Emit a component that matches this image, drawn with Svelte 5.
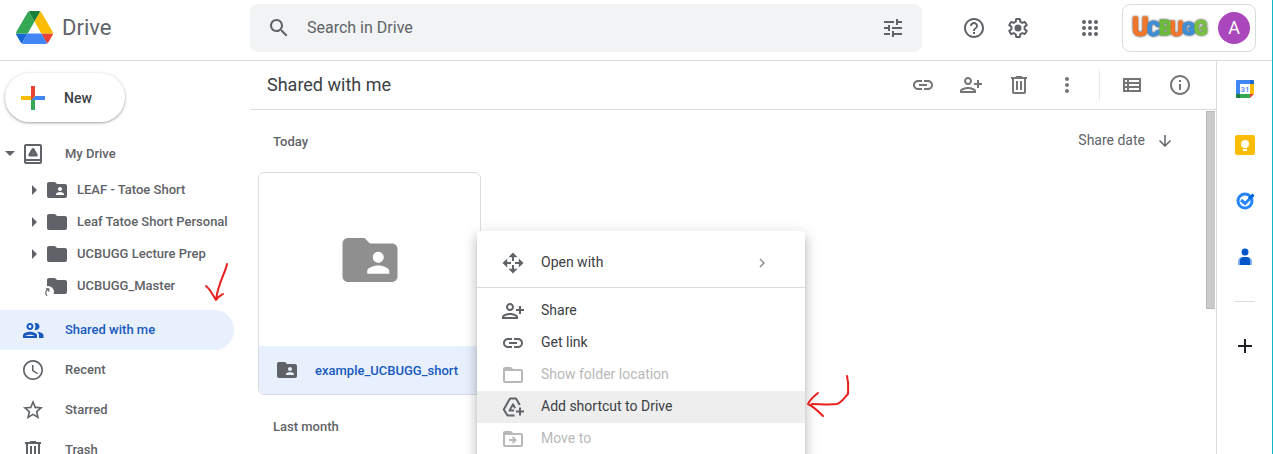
<script lang="ts">
  const icons: Record<string, string> = {
    link: 'M3.9 12c0-1.71 1.39-3.1 3.1-3.1h4V7H7c-2.76 0-5 2.24-5 5s2.24 5 5 5h4v-1.9H7c-1.71 0-3.1-1.39-3.1-3.1zM8 13h8v-2H8v2zm9-6h-4v1.9h4c1.71 0 3.1 1.39 3.1 3.1s-1.39 3.1-3.1 3.1h-4V17h4c2.76 0 5-2.24 5-5s-2.24-5-5-5z',
    personAdd: 'M13 8c0-2.21-1.79-4-4-4S5 5.79 5 8s1.79 4 4 4 4-1.79 4-4zm-2 0c0 1.1-.9 2-2 2s-2-.9-2-2 .9-2 2-2 2 .9 2 2zM1 18v2h16v-2c0-2.66-5.33-4-8-4s-8 1.34-8 4zm2 0c.2-.71 3.3-2 6-2 2.69 0 5.78 1.28 6 2H3zM20 15v-3h3v-2h-3V7h-2v3h-3v2h3v3h2z',
    trash: 'M15 4V3H9v1H4v2h1v13c0 1.1.9 2 2 2h10c1.1 0 2-.9 2-2V6h1V4h-5zm2 15H7V6h10v13zM9 8h2v9H9zm4 0h2v9h-2z',
    more: 'M12 8c1.1 0 2-.9 2-2s-.9-2-2-2-2 .9-2 2 .9 2 2 2zm0 2c-1.1 0-2 .9-2 2s.9 2 2 2 2-.9 2-2-.9-2-2-2zm0 6c-1.1 0-2 .9-2 2s.9 2 2 2 2-.9 2-2-.9-2-2-2z',
    list: 'M3 5v14h18V5H3zm4 2v2H5V7h2zm-2 6v-2h2v2H5zm0 2h2v2H5v-2zm14 2H9v-2h10v2zm0-4H9v-2h10v2zm0-4H9V7h10v2z',
    info: 'M11 7h2v2h-2zm0 4h2v6h-2zm1-9C6.48 2 2 6.48 2 12s4.48 10 10 10 10-4.48 10-10S17.52 2 12 2zm0 18c-4.41 0-8-3.59-8-8s3.59-8 8-8 8 3.59 8 8-3.59 8-8 8z',
    help: 'M11 18h2v-2h-2v2zm1-16C6.48 2 2 6.48 2 12s4.48 10 10 10 10-4.48 10-10S17.52 2 12 2zm0 18c-4.41 0-8-3.59-8-8s3.59-8 8-8 8 3.59 8 8-3.59 8-8 8zm0-14c-2.21 0-4 1.79-4 4h2c0-1.1.9-2 2-2s2 .9 2 2c0 2-3 1.75-3 5h2c0-2.25 3-2.5 3-5 0-2.21-1.79-4-4-4z',
    apps: 'M6 4a2 2 0 1 0 0 4a2 2 0 1 0 0-4zm6 0a2 2 0 1 0 0 4a2 2 0 1 0 0-4zm6 0a2 2 0 1 0 0 4a2 2 0 1 0 0-4zM6 10a2 2 0 1 0 0 4a2 2 0 1 0 0-4zm6 0a2 2 0 1 0 0 4a2 2 0 1 0 0-4zm6 0a2 2 0 1 0 0 4a2 2 0 1 0 0-4zM6 16a2 2 0 1 0 0 4a2 2 0 1 0 0-4zm6 0a2 2 0 1 0 0 4a2 2 0 1 0 0-4zm6 0a2 2 0 1 0 0 4a2 2 0 1 0 0-4z',
    tune: 'M13 21v-2h8v-2h-8v-2h-2v6h2zM3 17v2h6v-2H3zM21 13v-2H11v2h10zM7 9v2H3v2h4v2h2V9H7zM15 9h2V7h4V5h-4V3h-2v6zM3 5v2h10V5H3z',
    search: 'M15.500 14h-.79l-.28-.27C15.410 12.590 16 11.110 16 9.500 16 5.910 13.090 3 9.500 3S3 5.910 3 9.500 5.910 16 9.500 16c1.610 0 3.090-.59 4.230-1.570l.27.28v.79l5 4.990L20.490 19l-4.990-5zm-6 0C7.010 14 5 11.990 5 9.500S7.010 5 9.500 5 14 7.010 14 9.500 11.990 14 9.500 14z',
    folder: 'M10 4H4c-1.100 0-2 .9-2 2v12c0 1.100.9 2 2 2h16c1.100 0 2-.9 2-2V8c0-1.100-.9-2-2-2h-8l-2-2z',
    folderShared: 'M20 6h-8l-2-2H4c-1.100 0-2 .9-2 2v12c0 1.100.9 2 2 2h16c1.100 0 2-.9 2-2V8c0-1.100-.9-2-2-2zm-5 3c1.100 0 2 .9 2 2s-.9 2-2 2-2-.9-2-2 .9-2 2-2zm4 8h-8v-1c0-1.330 2.670-2 4-2s4 .67 4 2v1z',
    folderOpen: 'M20 6h-8l-2-2H4c-1.100 0-2 .9-2 2v12c0 1.100.9 2 2 2h16c1.100 0 2-.9 2-2V8c0-1.100-.9-2-2-2zm0 12H4V8h16v10z',
    moveTo: 'M20 6h-8l-2-2H4c-1.100 0-2 .9-2 2v12c0 1.100.9 2 2 2h16c1.100 0 2-.9 2-2V8c0-1.100-.9-2-2-2zm0 12H4V8h16v10zM12.200 9.200l-1.300 1.300 1.500 1.600H8v1.800h4.400l-1.500 1.600 1.300 1.300L16 13z',
    people: 'M9 13.750c-2.340 0-7 1.170-7 3.500V20h14v-2.750c0-2.330-4.660-3.500-7-3.500zM4.340 18c.84-.58 2.870-1.250 4.660-1.250s3.820.67 4.660 1.250H4.340zM9 12c1.930 0 3.500-1.570 3.500-3.500S10.930 5 9 5 5.500 6.570 5.500 8.500 7.070 12 9 12zm0-5c.83 0 1.500.67 1.500 1.500S9.830 10 9 10s-1.500-.67-1.500-1.500S8.170 7 9 7z',
    clock: 'M11.990 2C6.470 2 2 6.480 2 12s4.470 10 9.990 10C17.520 22 22 17.520 22 12S17.520 2 11.990 2zM12 20.300c-4.580 0-8.300-3.720-8.300-8.300s3.720-8.300 8.300-8.300 8.300 3.720 8.300 8.300-3.720 8.300-8.300 8.300zm.500-13.300H11v6l5.250 3.150.75-1.230-4.500-2.670z',
    star: 'M22 9.240l-7.190-.62L12 2 9.190 8.630 2 9.240l5.460 4.730L5.820 21 12 17.270 18.180 21l-1.630-7.030L22 9.240zM12 15.400l-3.760 2.270 1-4.280-3.320-2.880 4.380-.38L12 6.100l1.710 4.040 4.380.38-3.320 2.880 1 4.280L12 15.400z',
    down: 'M20 12l-1.410-1.410L13 16.170V4h-2v12.170l-5.580-5.590L4 12l8 8 8-8z',
    chevron: 'M10 6L8.590 7.410 13.170 12l-4.580 4.590L10 18l6-6z',
  };

  const folders = [
    { name: 'LEAF - Tatoe Short', icon: 'folderShared', expand: true },
    { name: 'Leaf Tatoe Short Personal', icon: 'folder', expand: true },
    { name: 'UCBUGG Lecture Prep', icon: 'folder', expand: true },
    { name: 'UCBUGG_Master', icon: 'folder', expand: false },
  ];
  const places = [
    { name: 'Shared with me', icon: 'people', active: true },
    { name: 'Recent', icon: 'clock', active: false },
    { name: 'Starred', icon: 'star', active: false },
    { name: 'Trash', icon: 'trash', active: false },
  ];
  const actions = [
    { name: 'Get link', icon: 'link' },
    { name: 'Share', icon: 'personAdd' },
    { name: 'Remove', icon: 'trash' },
    { name: 'More actions', icon: 'more' },
  ];
  const menu = [
    { name: 'Share', icon: 'personAdd' },
    { name: 'Get link', icon: 'link' },
    { name: 'Show folder location', icon: 'folderOpen', disabled: true },
    { name: 'Add shortcut to Drive', icon: 'shortcut', hover: true },
    { name: 'Move to', icon: 'moveTo', disabled: true },
  ];
  const letters = [
    { char: 'U', x: 1, y: 26, size: 25, fill: '#f0762b' },
    { char: 'C', x: 16, y: 26, size: 20, fill: '#3f8fd6' },
    { char: 'B', x: 28, y: 25, size: 20, fill: '#6dbb3c' },
    { char: 'U', x: 39, y: 26, size: 20, fill: '#f0762b' },
    { char: 'G', x: 51, y: 25, size: 19, fill: '#3f8fd6' },
    { char: 'G', x: 63, y: 25, size: 20, fill: '#7ac143' },
  ];
</script>

{#snippet icon(name: string, size = 24)}
  <svg class="icon" width={size} height={size} viewBox="0 0 24 24" aria-hidden="true">
    {#if name === 'shortcut'}
      <g fill="none" stroke="currentColor" stroke-width="2" stroke-linejoin="round">
        <path d="M13.500 20.500H6.500L2.800 14.500 9 3.500h6l3.800 6.500" />
        <path d="M13 15.500H8.500l3.500-6.200 2.200 3.900" stroke-width="1.800" />
        <path d="M19 12.500v8M15 16.500h8" />
      </g>
    {:else if name === 'openWith'}
      <path d="M12 1.500l4.500 4.700H13V10h-2V6.200H7.500zM12 22.500l4.500-4.700H13V14h-2v3.800H7.500zM1.500 12l4.700-4.500V11H10v2H6.200v3.500zM22.500 12l-4.700-4.500V11H14v2h3.800v3.500z" />
    {:else if name === 'gear'}
      <path
        d="M10.200 3h3.600l.5 2.700 2 1.200 2.600-1 1.800 3.200-2.100 1.700v2.400l2.100 1.700-1.800 3.200-2.600-1-2 1.200-.5 2.700h-3.600l-.5-2.700-2-1.200-2.600 1-1.800-3.200 2.100-1.700v-2.400L3.300 9.100l1.800-3.200 2.600 1 2-1.200z"
        fill="none"
        stroke="currentColor"
        stroke-width="2"
        stroke-linejoin="round"
      />
      <circle cx="12" cy="12" r="3.500" />
    {:else}
      <path d={icons[name]} />
      {#if name === 'people'}
        <path d="M15 12c1.930 0 3.500-1.570 3.500-3.500S16.930 5 15 5c-.54 0-1.040.13-1.500.35.63.89 1 1.980 1 3.150s-.37 2.260-1 3.150c.46.22.96.35 1.500.35zM16.040 13.810c1.160.84 1.960 1.960 1.960 3.440V20h4.500v-2.750c0-2.020-3.500-3.170-6.460-3.440z" />
      {/if}
    {/if}
  </svg>
{/snippet}

<div class="page">
  <header>
    <a class="brand" href="#home">
      <svg width="37" height="33" viewBox="0 0 87.3 78" aria-hidden="true">
        <path d="m6.600 66.850 3.850 6.650c.8 1.400 1.950 2.500 3.300 3.300l13.750-23.800h-27.500c0 1.550.4 3.100 1.200 4.500z" fill="#1967d2" />
        <path d="m43.650 25-13.750-23.800c-1.350.8-2.500 1.900-3.300 3.300l-25.400 44a9.060 9.060 0 0 0 -1.200 4.500h27.500z" fill="#34a853" />
        <path d="m73.550 76.800c1.350-.8 2.500-1.900 3.300-3.300l1.600-2.750 7.650-13.250c.8-1.400 1.200-2.950 1.200-4.500h-27.500l5.850 11.500z" fill="#ea4335" />
        <path d="m43.650 25 13.750-23.800c-1.350-.8-2.900-1.200-4.500-1.200h-18.500c-1.600 0-3.150.45-4.500 1.200z" fill="#188038" />
        <path d="m59.800 53h-32.300l-13.750 23.800c1.350.8 2.900 1.200 4.500 1.200h50.800c1.600 0 3.150-.45 4.500-1.200z" fill="#4285f4" />
        <path d="m73.400 26.500-12.700-22c-.8-1.400-1.950-2.500-3.300-3.300l-13.750 23.800 16.150 28h27.450c0-1.550-.4-3.100-1.200-4.500z" fill="#fbbc04" />
      </svg>
      <span>Drive</span>
    </a>
    <form class="search">
      <button type="button" aria-label="Search">{@render icon('search')}</button>
      <input type="text" placeholder="Search in Drive" aria-label="Search in Drive" />
      <button type="button" aria-label="Search options">{@render icon('tune')}</button>
    </form>
    <div class="tools">
      <button aria-label="Support">{@render icon('help')}</button>
      <button aria-label="Settings">{@render icon('gear')}</button>
      <button class="apps" aria-label="Google apps">{@render icon('apps')}</button>
      <button class="account" aria-label="Account">
        <svg class="wordmark" width="78" height="36" viewBox="0 0 78 36">
          {#each letters as l}
            <text x={l.x} y={l.y} font-size={l.size} fill={l.fill} stroke={l.fill}>{l.char}</text>
          {/each}
        </svg>
        <span class="avatar">A</span>
      </button>
    </div>
  </header>

  <div class="body">
    <nav>
      <button class="new">
        <svg width="36" height="36" viewBox="0 0 36 36" aria-hidden="true">
          <path fill="#34a853" d="M16 16v14h4V20z" />
          <path fill="#4285f4" d="M30 16H20l-4 4h14z" />
          <path fill="#fbbc05" d="M6 16v4h10l4-4z" />
          <path fill="#ea4335" d="M20 16V6h-4v14z" />
        </svg>
        <span>New</span>
      </button>
      <a class="row root" href="#my-drive">
        <svg class="caret" width="10" height="6" viewBox="0 0 10 6" aria-hidden="true"><path d="M0 0h10L5 5z" /></svg>
        <svg class="icon" width="24" height="24" viewBox="0 0 24 24" aria-hidden="true">
          <path d="M19 2H5c-1.100 0-2 .9-2 2v16c0 1.100.9 2 2 2h14c1.100 0 2-.9 2-2V4c0-1.100-.9-2-2-2zm0 18H5v-1h14v1zm0-3H5V4h14v13z" />
          <path d="M12 7.500l-3.200 5.500h6.400z" fill="none" stroke="currentColor" stroke-width="3" stroke-linejoin="round" />
        </svg>
        <span>My Drive</span>
      </a>
      <div class="tree">
        {#each folders as f}
          <a class="child" href="#folder">
            <svg class="caret" width="5" height="10" viewBox="0 0 5 10" aria-hidden="true">
              {#if f.expand}<path d="M0 0v10l5-5z" />{/if}
            </svg>
            {#if f.expand}
              {@render icon(f.icon)}
            {:else}
              <svg class="icon" width="24" height="24" viewBox="0 0 24 24" aria-hidden="true">
                <path d={icons.folder} />
                <circle cx="3" cy="18" r="6" fill="#fff" />
                <path d="M2 22C0 19.500.500 16.500 3.200 15.500M.8 14.800h3v3" fill="none" stroke="currentColor" stroke-width="1.200" />
              </svg>
            {/if}
            <span>{f.name}</span>
          </a>
        {/each}
      </div>
      {#each places as p}
        <a class="row place" class:active={p.active} href="#place">
          {@render icon(p.icon)}
          <span>{p.name}</span>
        </a>
      {/each}
      <svg class="mark mark-nav" width="26" height="42" viewBox="0 0 26 42" aria-hidden="true">
        <path d="M23 3C21 13 14 22 12 39M2 25c4 3 6 8 10 14 1-3 4-4 7-6" />
      </svg>
    </nav>

    <main>
      <div class="toolbar">
        <h1>Shared with me</h1>
        {#each actions as a}
          <button aria-label={a.name}>{@render icon(a.icon)}</button>
        {/each}
        <span class="rule"></span>
        <button aria-label="List view">{@render icon('list')}</button>
        <button aria-label="View details">{@render icon('info')}</button>
      </div>
      <div class="content">
        <div class="group">
          <h2>Today</h2>
          <button class="sort"><span>Share date</span>{@render icon('down', 18)}</button>
        </div>
        <button class="card">
          <span class="thumb">{@render icon('folderShared', 66)}</span>
          <span class="caption">{@render icon('folderShared')}<span>example_UCBUGG_short</span></span>
        </button>
        <div class="group"><h2>Last month</h2></div>
        <div class="scrollbar"></div>
      </div>

      <div class="menu" role="menu">
        <button class="item" role="menuitem">
          {@render icon('openWith')}<span>Open with</span>{@render icon('chevron', 18)}
        </button>
        <hr />
        {#each menu as m}
          <button class="item" class:hover={m.hover} role="menuitem" disabled={m.disabled}>
            {@render icon(m.icon)}<span>{m.name}</span>
          </button>
        {/each}
        <svg class="mark mark-menu" width="46" height="46" viewBox="0 0 46 46" aria-hidden="true">
          <path d="M42 3c2 8 1 13 1 18-4 4-6 8-11 10-9 1-17 0-25 0M13 20C9 23 5 27 3 31c5 2 10 7 15 12" />
        </svg>
      </div>
    </main>

    <aside>
      <button aria-label="Calendar">
        <svg width="20" height="20" viewBox="0 0 20 20">
          <path fill="#4285f4" d="M2 1h13v4H5v10H1V2a1 1 0 0 1 1-1z" />
          <path fill="#1967d2" d="M15 1h3a1 1 0 0 1 1 1v3h-4z" />
          <path fill="#fbbc04" d="M15 5h4v10h-4z" />
          <path fill="#34a853" d="M5 15h10v4H5z" />
          <path fill="#188038" d="M1 15h4v4H2a1 1 0 0 1-1-1z" />
          <path fill="#ea4335" d="M15 15h4l-4 4z" />
          <path fill="#fff" d="M5 5h10v10H5z" />
          <text x="10" y="13" text-anchor="middle" font-size="8" font-weight="500" fill="#4285f4">31</text>
        </svg>
      </button>
      <button aria-label="Keep">
        <svg width="20" height="20" viewBox="0 0 20 20">
          <rect width="20" height="20" rx="2" fill="#fbbc04" />
          <circle cx="10" cy="9" r="4" fill="#fff" />
          <path fill="#fff" d="M8 11h4v2H8zM8 14h4v2H8z" />
        </svg>
      </button>
      <button aria-label="Tasks">
        <svg width="20" height="20" viewBox="0 0 20 20" fill="none">
          <circle cx="10" cy="10" r="7" stroke="#2684fc" stroke-width="3" />
          <path d="M6 9l4 3.500 8-8" stroke="#2684fc" stroke-width="3" />
          <path d="M14 7.500l4.500-4" stroke="#0066da" stroke-width="3" />
        </svg>
      </button>
      <button aria-label="Contacts">
        <svg width="20" height="20" viewBox="0 0 20 20">
          <circle cx="10" cy="5" r="3.500" fill="#0057cc" />
          <path fill="#7baaf7" d="M3 18v-4a5 5 0 0 1 5-4h4a5 5 0 0 1 5 4v4z" />
          <path fill="#0057cc" d="M5 18v-4a4 4 0 0 1 4-4h2a4 4 0 0 1 4 4v4z" />
        </svg>
      </button>
      <hr />
      <button class="add" aria-label="Get add-ons">
        <svg width="20" height="20" viewBox="0 0 20 20"><path d="M9 3h2v6h6v2h-6v6H9v-6H3V9h6z" /></svg>
      </button>
    </aside>
  </div>
</div>

<style>
  :global(body) {
    margin: 0;
  }
  .page {
    display: flex;
    flex-direction: column;
    height: 100vh;
    box-sizing: border-box;
    overflow: hidden;
    border-right: 1px solid #12b5c3;
    background: #fff;
    color: #5f6368;
    font-family: Roboto, Arial, sans-serif;
    font-size: 13px;
  }
  .page * {
    box-sizing: border-box;
  }
  button {
    display: flex;
    align-items: center;
    justify-content: center;
    padding: 0;
    border: 0;
    background: none;
    color: inherit;
    font: inherit;
  }
  a {
    color: inherit;
    text-decoration: none;
  }
  svg {
    display: block;
    flex: none;
  }
  .icon {
    fill: currentColor;
  }
  hr {
    margin: 0;
    border: 0;
    border-top: 1px solid #dadce0;
  }

  header {
    display: flex;
    flex: none;
    align-items: center;
    height: 61px;
    padding: 0 16px 5px 0;
    border-bottom: 1px solid #dadce0;
  }
  .brand {
    display: flex;
    align-items: center;
    gap: 9px;
    width: 250px;
    padding-left: 16px;
    font-size: 22px;
  }
  .search {
    display: flex;
    flex: 1;
    align-items: center;
    height: 48px;
    padding: 0 17px;
    border-radius: 8px;
    background: #f1f3f4;
  }
  .search input {
    flex: 1;
    min-width: 0;
    margin: 0 16px;
    padding: 0;
    border: 0;
    outline: 0;
    background: none;
    font: 16px Roboto, Arial, sans-serif;
  }
  .search input::placeholder {
    color: #5f6368;
    opacity: 1;
  }
  .tools {
    display: flex;
    align-items: center;
    gap: 20px;
    padding-left: 40px;
  }
  .apps {
    margin: 0 0 0 28px;
  }
  .account {
    gap: 9px;
    height: 48px;
    padding: 0 5px 0 8px;
    border: 1px solid #dadce0;
    border-radius: 8px;
  }
  .wordmark {
    font-weight: 900;
    stroke-width: 1px;
    stroke-linejoin: round;
    filter: drop-shadow(0 0 1px #4a4a55);
  }
  .avatar {
    display: flex;
    align-items: center;
    justify-content: center;
    width: 32px;
    height: 32px;
    border-radius: 50%;
    background: #ab47bc;
    color: #fff;
    font-size: 18px;
  }

  .body {
    display: flex;
    flex: 1;
    min-height: 0;
  }
  nav {
    position: relative;
    flex: none;
    width: 251px;
    padding: 12px 17px 0 0;
    font-weight: 500;
  }
  .new {
    gap: 13px;
    height: 49px;
    margin: 0 0 12px 5px;
    padding: 0 33px 0 10px;
    border-radius: 25px;
    box-shadow: 0 1px 2px rgba(60, 64, 67, 0.3), 0 1px 3px 1px rgba(60, 64, 67, 0.15);
    color: #3c4043;
    font-size: 14px;
  }
  .row {
    display: flex;
    align-items: center;
    height: 40px;
    gap: 20px;
    padding-left: 21px;
  }
  .row > span,
  .child > span,
  .item > span,
  .sort > span {
    padding-bottom: 2px;
  }
  .root .caret {
    margin: 0 -14px 0 -16px;
  }
  .caret {
    fill: #5f6368;
  }
  .tree {
    padding-bottom: 8px;
  }
  .child {
    display: flex;
    align-items: center;
    height: 32px;
    padding-left: 32px;
    white-space: nowrap;
  }
  .child .icon {
    margin: 0 8px;
    overflow: visible;
  }
  .place.active {
    border-radius: 0 20px 20px 0;
    background: #e8f0fe;
    color: #185abc;
  }
  .mark {
    position: absolute;
    fill: none;
    stroke: #e8201e;
    stroke-width: 2px;
    stroke-linecap: round;
    stroke-linejoin: round;
  }
  .mark-nav {
    top: 200px;
    left: 204px;
  }

  main {
    position: relative;
    display: flex;
    flex: 1;
    flex-direction: column;
    min-width: 0;
  }
  .toolbar {
    display: flex;
    flex: none;
    align-items: center;
    gap: 24px;
    height: 49px;
    padding: 0 24px 0 16px;
    border-bottom: 1px solid #dadce0;
    color: #757575;
  }
  h1 {
    flex: 1;
    margin: 0;
    padding-bottom: 2px;
    color: #3c4043;
    font-size: 18px;
    font-weight: 400;
  }
  .rule {
    width: 1px;
    height: 32px;
    margin: 0 -4px 0 -4px;
    background: #e8eaed;
  }
  .content {
    position: relative;
    flex: 1;
    min-height: 0;
    padding: 0 42px 0 7px;
  }
  .group {
    display: flex;
    align-items: center;
    justify-content: space-between;
    height: 62px;
    padding-left: 15px;
  }
  h2 {
    margin: 0;
    font-size: 13px;
    font-weight: 500;
  }
  .sort {
    gap: 11px;
    font-size: 14px;
  }
  .card {
    display: flex;
    flex-direction: column;
    align-items: stretch;
    width: 223px;
    overflow: hidden;
    border: 1px solid #dadce0;
    border-radius: 6px;
    color: #5f6368;
    font-weight: 500;
  }
  .thumb {
    display: flex;
    align-items: center;
    justify-content: center;
    height: 173px;
    color: #8f8f8f;
  }
  .caption {
    display: flex;
    align-items: center;
    gap: 16px;
    height: 48px;
    padding-left: 16px;
    background: #e8f0fe;
  }
  .caption span {
    color: #185abc;
  }
  .scrollbar {
    position: absolute;
    top: 1px;
    right: 1px;
    width: 9px;
    height: 198px;
    border: 1px solid #b8b8b8;
    border-right: 0;
    background: #cbcbcb;
  }

  .menu {
    position: absolute;
    top: 170px;
    left: 226px;
    width: 328px;
    padding: 16px 0;
    border-radius: 4px;
    background: #fff;
    box-shadow: 0 5px 5px -3px rgba(0, 0, 0, 0.2), 0 8px 10px 1px rgba(0, 0, 0, 0.14), 0 3px 14px 2px rgba(0, 0, 0, 0.12);
    color: #5f6368;
    font-size: 14px;
  }
  .menu hr {
    margin: 8px 0 7px;
  }
  .item {
    justify-content: flex-start;
    gap: 16px;
    width: 100%;
    height: 32px;
    padding: 0 34px 0 24px;
    text-align: left;
  }
  .item span {
    flex: 1;
    color: #3c4043;
  }
  .item span + :global(svg) {
    opacity: 0.7;
  }
  .item:disabled,
  .item:disabled span {
    color: #b8b8b8;
  }
  .item.hover {
    background: #eee;
  }
  .mark-menu {
    top: 142px;
    left: 328px;
  }

  aside {
    display: flex;
    flex: none;
    flex-direction: column;
    align-items: center;
    gap: 36px;
    width: 56px;
    padding-top: 18px;
    border-left: 1px solid #dadce0;
  }
  aside hr {
    width: 20px;
    margin: -2px 0;
  }
  .add {
    fill: #202124;
  }
</style>
